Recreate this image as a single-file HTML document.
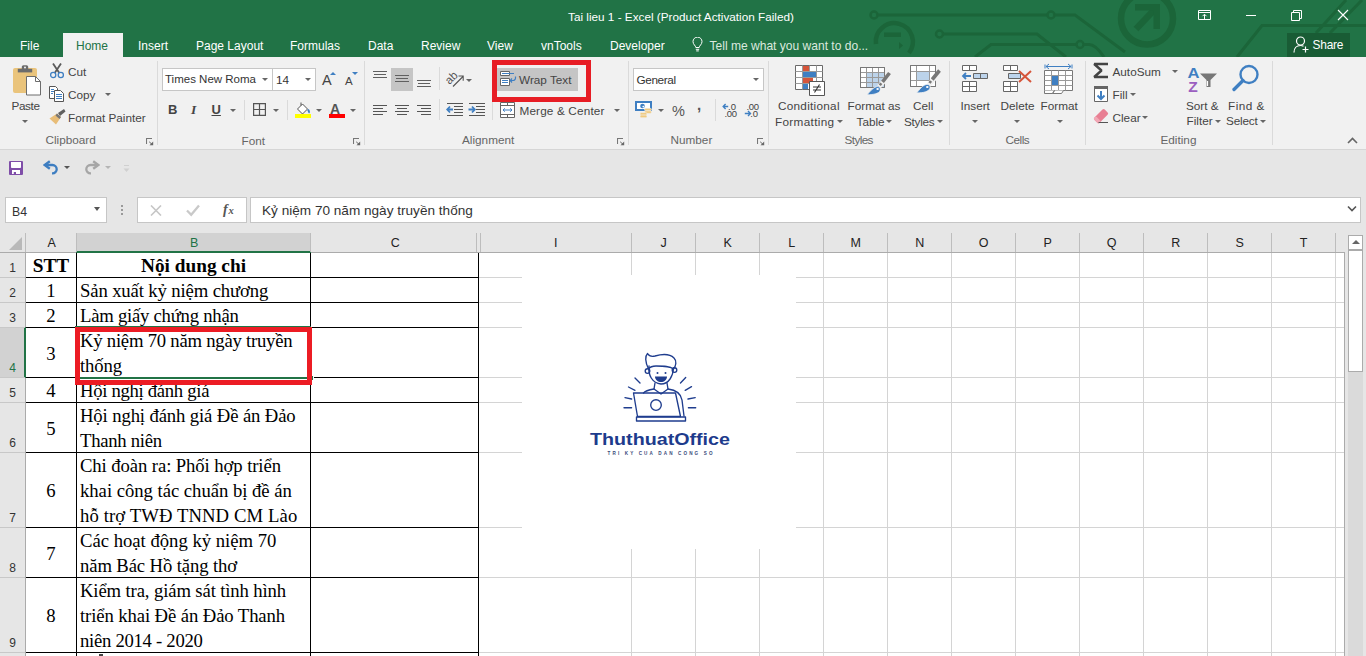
<!DOCTYPE html>
<html><head><meta charset="utf-8">
<style>
*{margin:0;padding:0;box-sizing:border-box}
html,body{width:1366px;height:656px;overflow:hidden;background:#e6e6e6;font-family:"Liberation Sans",sans-serif;position:relative}
.a{position:absolute}
.t{position:absolute;white-space:nowrap;line-height:1}
#title{left:0;top:0;width:1366px;height:57px;background:#217346}
.tab{color:#fff;font-size:12px}
#ribbon{left:0;top:57px;width:1366px;height:93px;background:#f1f1f1;border-bottom:1px solid #d6d6d6}
.rl{color:#444;font-size:11.75px}
.gl{color:#666;font-size:11.75px}
.sep{position:absolute;width:1px;background:#dadada}
.arr{position:absolute;width:0;height:0;border-left:3px solid transparent;border-right:3px solid transparent;border-top:3px solid #666}
.box{position:absolute;background:#fff;border:1px solid #c6c6c6}
.hl{position:absolute;height:1px;background:#000}
.vl{position:absolute;width:1px;background:#000}
.gh{position:absolute;height:1px;background:#d4d4d4}
.gv{position:absolute;width:1px;background:#d4d4d4}
.ch{position:absolute;top:237px;color:#222;font-size:12.5px;text-align:center;line-height:1}
.rh{position:absolute;left:0;width:25px;color:#333;font-size:12px;text-align:center;line-height:1}
.c{position:absolute;font-family:"Liberation Serif",serif;font-size:18.7px;color:#000;white-space:nowrap;line-height:25px}
</style></head><body>
<!-- TITLE BAR -->
<div id="title" class="a"></div>
<!--TITLESTART-->
<svg class="a" style="left:840px;top:0" width="526" height="57" viewBox="840 0 526 57">
 <g fill="none" stroke="#1b6539" stroke-width="3">
  <circle cx="874" cy="15" r="3.5" stroke-width="2.5"/>
  <path d="M877.5 15H1047.5"/>
  <circle cx="1051" cy="15" r="3.5" stroke-width="2.5"/>
  <path d="M1054.5 15H1075L1125 52"/>
  <circle cx="939.5" cy="34" r="3.5" stroke-width="2.5"/>
  <path d="M943 34H1037L1066 57"/>
  <path d="M975 57L991 44.5H1076.5"/>
  <circle cx="1080" cy="44.5" r="3.5" stroke-width="2.5"/>
  <path d="M1083.5 44.5H1089C1094 44.5 1098 48 1104 57"/>
  <path d="M876 44A18.5 18.5 0 1 1 909 53" stroke-width="4.5"/>
  <path d="M1237 57L1262 25.5H1366M1316 33L1346 0M1330 33L1362 0" stroke-width="3"/>
  <circle cx="1147" cy="18.5" r="26" stroke-width="6.5"/>
  <path d="M1136 29L1156 8" stroke-width="6.5"/>
 </g>
 <path d="M884 32.5h17v4.5h-17z" fill="#1b6539"/>
 <path d="M899 42l4 3.5-4 3.5z" fill="#1b6539"/>
 <path d="M1135 4h25v25h-6.5v-18.5h-18.5z" fill="#1b6539"/>
</svg>
<!-- window controls -->
<svg class="a" style="left:1197px;top:9px" width="15" height="12" viewBox="0 0 15 12"><path d="M1.5 1.5h12v9h-12zM1.5 3.5h12" fill="none" stroke="#fff"/><path d="M7.5 10V5.5M5.5 7.2L7.5 5.2 9.5 7.2" fill="none" stroke="#fff"/></svg>
<div class="a" style="left:1246px;top:15px;width:10px;height:1px;background:#fff"></div>
<svg class="a" style="left:1291px;top:10px" width="12" height="11" viewBox="0 0 12 11"><path d="M0.5 2.5h8v8h-8zM2.5 2.5V0.5h8v8h-2" fill="none" stroke="#fff"/></svg>
<svg class="a" style="left:1337px;top:9px" width="12" height="12" viewBox="0 0 12 12"><path d="M1 1l10 10M11 1L1 11" stroke="#fff" stroke-width="1.1"/></svg>
<!-- share -->
<div class="a" style="left:1287px;top:33px;width:63px;height:24px;background:#195c35"></div>
<svg class="a" style="left:1293px;top:36px" width="17" height="17" viewBox="0 0 17 17">
 <circle cx="7.5" cy="5" r="4" fill="none" stroke="#fff" stroke-width="1.2"/>
 <path d="M1 16.5c0-4 2.5-7 6.5-7 1.2 0 2.2 0.3 3 0.8" fill="none" stroke="#fff" stroke-width="1.2"/>
 <path d="M12.5 10.5v6M9.5 13.5h6" stroke="#fff" stroke-width="1.2"/>
</svg>
<div class="t" style="left:1312.5px;top:39.5px;font-size:11.9px;color:#fff;letter-spacing:-0.2px">Share</div>
<!-- lightbulb -->
<svg class="a" style="left:692px;top:37px" width="11" height="15" viewBox="0 0 11 15">
 <path d="M3.8 10.5C3.8 8.7 1 7.5 1 4.6a4.5 4.5 0 0 1 9 0c0 2.9-2.8 4.1-2.8 5.9z" fill="none" stroke="#fff" stroke-width="1"/>
 <path d="M3.8 12.3h3.4M4.2 13.9h2.6" stroke="#fff" stroke-width="1"/>
</svg>
<!--TITLEEND-->

<div class="t tab" style="left:568px;top:11px;font-size:11.75px">Tai lieu 1 - Excel (Product Activation Failed)</div>

<!-- TABS -->
<div class="a" style="left:63px;top:33px;width:60px;height:24px;background:#f1f1f1"></div>
<div class="t tab" style="left:20px;top:40px">File</div>
<div class="t tab" style="left:76px;top:40px;color:#217346">Home</div>
<div class="t tab" style="left:138px;top:40px">Insert</div>
<div class="t tab" style="left:196px;top:40px">Page Layout</div>
<div class="t tab" style="left:290px;top:40px">Formulas</div>
<div class="t tab" style="left:368px;top:40px">Data</div>
<div class="t tab" style="left:421px;top:40px">Review</div>
<div class="t tab" style="left:487px;top:40px">View</div>
<div class="t tab" style="left:541px;top:40px">vnTools</div>
<div class="t tab" style="left:610px;top:40px">Developer</div>
<div class="t tab" style="left:709.5px;top:40px;color:#dbe9df;font-size:12.05px">Tell me what you want to do...</div>

<!-- RIBBON -->
<div id="ribbon" class="a"></div>
<!--RIBBON1START-->
<!-- separators -->
<div class="sep" style="left:157px;top:61px;height:84px"></div>
<div class="sep" style="left:364px;top:61px;height:84px"></div>
<div class="sep" style="left:628px;top:61px;height:84px"></div>
<div class="sep" style="left:768px;top:61px;height:84px"></div>
<div class="sep" style="left:949px;top:61px;height:84px"></div>
<div class="sep" style="left:1085px;top:61px;height:84px"></div>
<div class="sep" style="left:1272px;top:61px;height:84px"></div>
<!-- group labels -->
<div class="t gl" style="left:45.5px;top:134px">Clipboard</div>
<div class="t gl" style="left:241.5px;top:134.5px">Font</div>
<div class="t gl" style="left:462px;top:134px">Alignment</div>
<div class="t gl" style="left:670.5px;top:134px">Number</div>
<div class="t gl" style="left:844.5px;top:134px;letter-spacing:-0.6px">Styles</div>
<div class="t gl" style="left:1005.5px;top:134px;letter-spacing:-0.5px">Cells</div>
<div class="t gl" style="left:1160.5px;top:134px">Editing</div>
<!-- launchers -->
<svg class="a" style="left:146px;top:138px" width="8" height="8" viewBox="0 0 8 8"><path d="M0.5 6V0.5H6" fill="none" stroke="#777" stroke-width="1.1"/><path d="M3.2 3.8L6 6.3" stroke="#666" stroke-width="1"/><path d="M7.2 3.5V7.3H3.5z" fill="#666"/></svg>
<svg class="a" style="left:353px;top:138px" width="8" height="8" viewBox="0 0 8 8"><path d="M0.5 6V0.5H6" fill="none" stroke="#777" stroke-width="1.1"/><path d="M3.2 3.8L6 6.3" stroke="#666" stroke-width="1"/><path d="M7.2 3.5V7.3H3.5z" fill="#666"/></svg>
<svg class="a" style="left:617px;top:138px" width="8" height="8" viewBox="0 0 8 8"><path d="M0.5 6V0.5H6" fill="none" stroke="#777" stroke-width="1.1"/><path d="M3.2 3.8L6 6.3" stroke="#666" stroke-width="1"/><path d="M7.2 3.5V7.3H3.5z" fill="#666"/></svg>
<svg class="a" style="left:757px;top:138px" width="8" height="8" viewBox="0 0 8 8"><path d="M0.5 6V0.5H6" fill="none" stroke="#777" stroke-width="1.1"/><path d="M3.2 3.8L6 6.3" stroke="#666" stroke-width="1"/><path d="M7.2 3.5V7.3H3.5z" fill="#666"/></svg>
<!-- collapse ribbon -->
<svg class="a" style="left:1347px;top:137px" width="11" height="7" viewBox="0 0 11 7"><path d="M1 6L5.5 1.5L10 6" fill="none" stroke="#666" stroke-width="1.6"/></svg>

<!-- CLIPBOARD -->
<svg class="a" style="left:12px;top:64px" width="30" height="32" viewBox="0 0 30 32">
 <rect x="1" y="4" width="24" height="25" rx="2" fill="#eac47c"/>
 <path d="M5.8 4.8h14.4v3.6H5.8z" fill="#6c6c6c"/><path d="M9.8 5V2.8a1.6 1.6 0 0 1 1.6-1.6h3.2a1.6 1.6 0 0 1 1.6 1.6V5z" fill="#6c6c6c"/><circle cx="13" cy="3.6" r="1" fill="#f1f1f1"/>
 <path d="M14.5 12.5h9l5 5v13.5h-14z" fill="#fff" stroke="#6c6c6c"/><path d="M23.5 12.5v5h5" fill="none" stroke="#6c6c6c"/>
</svg>
<div class="t rl" style="left:11.5px;top:100px;letter-spacing:-0.4px">Paste</div>
<div class="arr" style="left:21.5px;top:120px"></div>
<svg class="a" style="left:49px;top:62px" width="16" height="17" viewBox="0 0 16 17">
 <path d="M4 1.5L10.3 11M12 1.5L5.7 11" fill="none" stroke="#5a5a5a" stroke-width="1.8"/>
 <circle cx="4.2" cy="13" r="2.6" fill="#f1f1f1" stroke="#3f7fc2" stroke-width="1.3"/><circle cx="11.8" cy="13" r="2.6" fill="#f1f1f1" stroke="#3f7fc2" stroke-width="1.3"/>
</svg>
<div class="t rl" style="left:68px;top:66px">Cut</div>
<svg class="a" style="left:49px;top:86px" width="16" height="16" viewBox="0 0 16 16">
 <path d="M0.5 0.5h6l2 2v10h-8z" fill="#fff" stroke="#555"/>
 <path d="M5.5 4.5h6l3 3v8h-9z" fill="#fff" stroke="#555"/>
 <path d="M2 3.5h3M2 5.5h3M2 7.5h2" stroke="#3f7fc2"/>
 <path d="M7 8.5h6M7 10.5h6M7 12.5h6" stroke="#3f7fc2"/>
</svg>
<div class="t rl" style="left:68px;top:88.5px">Copy</div>
<div class="arr" style="left:105px;top:93px"></div>
<svg class="a" style="left:49px;top:109px" width="17" height="16" viewBox="0 0 17 16">
 <path d="M9 4l6-4 1.5 2.5-5.5 4.5z" fill="#5f5f5f"/>
 <path d="M8 4.5l4 3.5-5 7.5L0.5 9.5z" fill="#e8bd78"/>
 <path d="M8 4.5l4 3.5-1.5 2-4-3.5z" fill="#777"/>
</svg>
<div class="t rl" style="left:68px;top:111.5px">Format Painter</div>

<!-- FONT -->
<div class="box" style="left:162px;top:68px;width:111px;height:23px"></div>
<div class="box" style="left:272px;top:68px;width:44px;height:23px"></div>
<div class="t" style="left:165px;top:74px;font-size:11.5px;color:#333">Times New Roma</div>
<div class="arr" style="left:262px;top:78px"></div>
<div class="t" style="left:276px;top:74px;font-size:11.75px;color:#333">14</div>
<div class="arr" style="left:305px;top:78px"></div>
<div class="t" style="left:322px;top:72.5px;font-size:14.5px;color:#444">A</div>
<div class="a" style="left:329.5px;top:72px;width:0;height:0;border-left:3px solid transparent;border-right:3px solid transparent;border-bottom:3px solid #3f7fc2"></div>
<div class="t" style="left:345px;top:76px;font-size:11.5px;color:#444">A</div>
<div class="a" style="left:351.5px;top:72px;width:0;height:0;border-left:3px solid transparent;border-right:3px solid transparent;border-top:3px solid #3f7fc2"></div>
<div class="t" style="left:168px;top:103px;font-size:13px;font-weight:bold;color:#444">B</div>
<div class="t" style="left:191px;top:103px;font-size:13.5px;font-style:italic;font-family:'Liberation Serif',serif;color:#444;font-weight:bold">I</div>
<div class="t" style="left:211.5px;top:103px;font-size:13px;font-weight:bold;color:#444;text-decoration:underline">U</div>
<div class="arr" style="left:230px;top:109px"></div>
<div class="sep" style="left:244px;top:100px;height:20px"></div>
<svg class="a" style="left:253px;top:103px" width="13" height="13" viewBox="0 0 13 13"><path d="M0.6 0.6h11.8v11.8H0.6zM6.5 0.6v11.8M0.6 6.5h11.8" fill="none" stroke="#555" stroke-width="1.2"/></svg>
<div class="arr" style="left:273px;top:109px"></div>
<div class="sep" style="left:287px;top:100px;height:20px"></div>
<svg class="a" style="left:295px;top:101px" width="17" height="18" viewBox="0 0 17 18">
 <path d="M6 1.5v3M2.5 8L7.5 3l5 5-5 5z" fill="#fff" stroke="#555"/>
 <path d="M13 8.5c1 1.5 1.5 2.5 0.5 3.2" fill="none" stroke="#3f7fc2" stroke-width="2"/>
 <rect x="0" y="13" width="16" height="4" fill="#ffff00"/>
</svg>
<div class="arr" style="left:316px;top:109px"></div>
<div class="t" style="left:330px;top:102px;font-size:14px;color:#555;font-weight:bold">A</div>
<div class="a" style="left:329px;top:114px;width:16px;height:4px;background:#ff0000"></div>
<div class="arr" style="left:350px;top:109px"></div>
<!--RIBBON1END-->
<!--RIBBON2START-->
<!-- ALIGNMENT -->
<svg class="a" style="left:372px;top:70px" width="16" height="9" viewBox="0 0 16 9"><path d="M1 1.5h14M2 4.5h12M1 7.5h14" stroke="#606060"/></svg>
<div class="a" style="left:391px;top:68px;width:22px;height:23px;background:#c5c5c5"></div>
<svg class="a" style="left:394px;top:74px" width="16" height="9" viewBox="0 0 16 9"><path d="M1 1.5h14M2 4.5h12M1 7.5h14" stroke="#606060"/></svg>
<svg class="a" style="left:416px;top:79px" width="16" height="9" viewBox="0 0 16 9"><path d="M1 1.5h14M2 4.5h12M1 7.5h14" stroke="#606060"/></svg>
<div class="sep" style="left:439px;top:67px;height:23px"></div>
<svg class="a" style="left:446px;top:69px" width="19" height="19" viewBox="0 0 19 19">
 <text x="0" y="0" font-family="Liberation Sans" font-size="11.5" fill="#555" transform="translate(3.5,16) rotate(-45)">ab</text>
 <path d="M7 17.5L17 7.5M12.5 7H17.2V11.7" fill="none" stroke="#555" stroke-width="1.1"/>
</svg>
<div class="arr" style="left:466px;top:79px"></div>
<svg class="a" style="left:372px;top:104px" width="16" height="12" viewBox="0 0 16 12"><path d="M1 1.5h14M1 4.5h10M1 7.5h14M1 10.5h10" stroke="#555"/></svg>
<svg class="a" style="left:394px;top:104px" width="16" height="12" viewBox="0 0 16 12"><path d="M1 1.5h14M3 4.5h10M1 7.5h14M3 10.5h10" stroke="#555"/></svg>
<svg class="a" style="left:416px;top:104px" width="16" height="12" viewBox="0 0 16 12"><path d="M1 1.5h14M5 4.5h10M1 7.5h14M5 10.5h10" stroke="#555"/></svg>
<div class="sep" style="left:439px;top:99px;height:21px"></div>
<svg class="a" style="left:446px;top:102px" width="18" height="14" viewBox="0 0 18 14">
 <path d="M1 1.5h16M8 4.5h9M8 7.5h9M8 10.5h9M1 13.5h16" stroke="#555"/>
 <path d="M1.5 7.5H7M4 4.5L1.2 7.5L4 10.5" fill="none" stroke="#3f7fc2" stroke-width="1.8"/>
</svg>
<svg class="a" style="left:468px;top:102px" width="18" height="14" viewBox="0 0 18 14">
 <path d="M1 1.5h16M8 4.5h9M8 7.5h9M8 10.5h9M1 13.5h16" stroke="#555"/>
 <path d="M0.5 7.5H6.5M4 4.5L6.8 7.5L4 10.5" fill="none" stroke="#3f7fc2" stroke-width="1.8"/>
</svg>
<div class="sep" style="left:492px;top:99px;height:21px"></div>
<div class="a" style="left:497px;top:68px;width:81px;height:23px;background:#c5c5c5"></div>
<svg class="a" style="left:499px;top:70px" width="18" height="17" viewBox="0 0 18 17">
 <path d="M1.5 1.5h9v4h-9zM1.5 8.5h9v7h-9z" fill="#fff" stroke="#666"/>
 <path d="M3 3.5h12M3 10.5h6M3 12.5h6" stroke="#3f7fc2"/>
 <path d="M16.5 6.5v1.5a2.5 2.5 0 0 1-2.5 2.5H11.5M13 8.5L11.2 10.5 13 12.5" fill="none" stroke="#3f7fc2" stroke-width="1.2"/>
</svg>
<div class="t rl" style="left:519px;top:74px">Wrap Text</div>
<svg class="a" style="left:499px;top:102px" width="17" height="16" viewBox="0 0 17 16">
 <path d="M1.5 0.5h14v15h-14z" fill="#fff" stroke="#666"/>
 <path d="M1.5 3.5h14M1.5 12.5h14M8.5 0.5v3M8.5 12.5v3" stroke="#666"/>
 <path d="M4 8h9M5.8 6.3L4 8 5.8 9.7M11.2 6.3L13 8 11.2 9.7" fill="none" stroke="#3f7fc2"/>
</svg>
<div class="t rl" style="left:519.5px;top:105px;letter-spacing:0.15px">Merge &amp; Center</div>
<div class="arr" style="left:613.5px;top:109px"></div>
<!-- red box -->
<div class="a" style="left:492px;top:60px;width:99px;height:42px;border:5px solid #e71d25"></div>

<!-- NUMBER -->
<div class="box" style="left:633px;top:68px;width:131px;height:23px"></div>
<div class="t" style="left:636.5px;top:74px;font-size:11.75px;color:#333;letter-spacing:-0.37px">General</div>
<div class="arr" style="left:753px;top:78px"></div>
<svg class="a" style="left:635px;top:101px" width="18" height="18" viewBox="0 0 18 18">
 <rect x="1" y="1" width="15" height="8" fill="#fff" stroke="#3f7fc2" stroke-width="2"/>
 <circle cx="7.5" cy="5" r="2.3" fill="#3f7fc2"/><circle cx="8.3" cy="5.6" r="0.9" fill="#fff"/>
 <g fill="#f0c97e" stroke="#f1f1f1" stroke-width="0.6"><rect x="9.5" y="7.3" width="7" height="2.6" rx="1.3"/><rect x="9.5" y="9.8" width="7" height="2.6" rx="1.3"/><rect x="5" y="11.6" width="7" height="2.6" rx="1.3"/><rect x="5" y="14.1" width="7" height="2.6" rx="1.3"/></g>
</svg>
<div class="arr" style="left:657.5px;top:109px"></div>
<div class="t" style="left:672px;top:104px;font-size:14.5px;color:#555">%</div>
<div class="t" style="left:697px;top:97px;font-size:15px;font-weight:bold;color:#555">,</div>
<div class="sep" style="left:715px;top:99px;height:22px"></div>
<svg class="a" style="left:722px;top:102px" width="16" height="16" viewBox="0 0 16 16">
 <path d="M1.2 4.5h5M3.6 2L1.2 4.5 3.6 7" fill="none" stroke="#3f7fc2" stroke-width="1.4"/>
 <text x="6" y="8.2" font-family="Liberation Sans" font-size="9.5" fill="#444">.0</text>
 <text x="2.5" y="15" font-family="Liberation Sans" font-size="9.5" fill="#444" letter-spacing="-0.3">.00</text>
</svg>
<svg class="a" style="left:744px;top:102px" width="16" height="16" viewBox="0 0 16 16">
 <text x="2.5" y="8.2" font-family="Liberation Sans" font-size="9.5" fill="#444" letter-spacing="-0.3">.00</text>
 <path d="M0.8 11.5h5.5M4 9L6.5 11.5 4 14" fill="none" stroke="#3f7fc2" stroke-width="1.4"/>
 <text x="6.2" y="15" font-family="Liberation Sans" font-size="9.5" fill="#444">.0</text>
</svg>
<!--RIBBON2END-->
<!--RIBBON3START-->
<!-- STYLES -->
<svg class="a" style="left:795px;top:65px" width="32" height="32" viewBox="0 0 32 32">
 <path d="M0.5 0.5h27v24h-27z" fill="#fff" stroke="#6a6a6a"/>
 <path d="M0.5 6.5h27M0.5 12.5h27M0.5 18.5h27M7.5 0.5v24M14.5 0.5v24M21.5 0.5v24" stroke="#9a9a9a"/>
 <rect x="8" y="1" width="6" height="5" fill="#d6553a"/>
 <rect x="8" y="7" width="13" height="5" fill="#3f7fc2"/>
 <rect x="8" y="13" width="10" height="5" fill="#d6553a"/>
 <rect x="8" y="19" width="5" height="5" fill="#3f7fc2"/>
 <path d="M14.5 16.5h15v14h-15z" fill="#fff" stroke="#555"/>
 <path d="M18 22h8M18 25h8M24.5 19.5l-5 8" stroke="#333" stroke-width="1.1"/>
</svg>
<div class="t rl" style="left:778px;top:100px;letter-spacing:0.27px">Conditional</div>
<div class="t rl" style="left:775px;top:115.5px;letter-spacing:0.33px">Formatting</div>
<div class="arr" style="left:836.5px;top:120px"></div>
<svg class="a" style="left:859px;top:67px" width="32" height="30" viewBox="0 0 32 30">
 <path d="M1.5 0.5h24v20h-24z" fill="#fff" stroke="#777"/>
 <rect x="7.5" y="5.5" width="18" height="15" fill="#bcd3ea"/>
 <path d="M1.5 5.5h24M1.5 10.5h24M1.5 15.5h24M7.5 0.5v20M13.5 0.5v20M19.5 0.5v20" stroke="#999"/>
 <path d="M1.5 0.5h24v20h-24z" fill="none" stroke="#777"/>
 <path d="M20 19.8L31 7" stroke="#f1f1f1" stroke-width="4.8"/>
 <path d="M30.5 6L23.5 14.8" stroke="#777" stroke-width="3.6"/>
 <path d="M22.3 16.3L20.8 18.2" stroke="#777" stroke-width="2.6"/>
 <path d="M8 27.8C11 24.5 14 20.5 17.5 19.7C20.3 19.2 22 21 21 23.8C20 26.3 15 27.8 8 27.8Z" fill="#3f7fc2" stroke="#f1f1f1" stroke-width="0.8"/>
 <ellipse cx="18.6" cy="22" rx="1.3" ry="1" fill="#fff"/>
</svg>
<div class="t rl" style="left:847.5px;top:100px">Format as</div>
<div class="t rl" style="left:856.5px;top:115.5px">Table</div>
<div class="arr" style="left:885.5px;top:120px"></div>
<svg class="a" style="left:909px;top:65px" width="32" height="30" viewBox="0 0 32 30">
 <path d="M1.5 0.5h25v21h-25z" fill="#fff" stroke="#777"/>
 <rect x="7.5" y="6.5" width="13" height="9" fill="#bcd3ea"/>
 <path d="M1.5 6.5h25M1.5 15.5h25M7.5 0.5v21M20.5 0.5v21" stroke="#999"/>
 <path d="M1.5 0.5h25v21h-25z" fill="none" stroke="#777"/>
 <path d="M19.8 19.8L31.5 6.5" stroke="#f1f1f1" stroke-width="4.8"/>
 <path d="M30.5 5.5L23.2 14.5" stroke="#777" stroke-width="3.6"/>
 <path d="M22 16L20.5 18" stroke="#777" stroke-width="2.6"/>
 <path d="M7.6 28C10.5 24.6 13.5 20.3 17.2 19.5C20 19 21.8 20.8 20.8 23.6C19.8 26.3 14.8 28 7.6 28Z" fill="#3f7fc2" stroke="#f1f1f1" stroke-width="0.8"/>
 <ellipse cx="18.3" cy="21.9" rx="1.3" ry="1" fill="#fff"/>
</svg>
<div class="t rl" style="left:913px;top:100px">Cell</div>
<div class="t rl" style="left:904px;top:115.5px;letter-spacing:-0.26px">Styles</div>
<div class="arr" style="left:937px;top:120px"></div>

<!-- CELLS -->
<svg class="a" style="left:961px;top:64px" width="28" height="29" viewBox="0 0 28 29">
 <path d="M1.5 1.5h14v5h-14zM1.5 17.5h14v10h-14z" fill="#fff" stroke="#666"/>
 <path d="M8.5 1.5v5M1.5 22.5h14M8.5 17.5v10" stroke="#666"/>
 <path d="M12.5 9.5h14v5h-14z" fill="#bdd4ec" stroke="#666"/><path d="M19.5 9.5v5" stroke="#666"/>
 <path d="M2 12h8M5 9L2 12 5 15" fill="none" stroke="#3f7fc2" stroke-width="1.8"/>
</svg>
<div class="t rl" style="left:960.5px;top:100px">Insert</div>
<div class="arr" style="left:971.5px;top:120px"></div>
<svg class="a" style="left:1002px;top:64px" width="32" height="30" viewBox="0 0 32 30">
 <path d="M1.5 1.5h14v5h-14zM1.5 17.5h14v10h-14z" fill="#fff" stroke="#666"/>
 <path d="M8.5 1.5v5M1.5 22.5h14M8.5 17.5v10" stroke="#666"/>
 <path d="M6.5 9.5h12v5h-12z" fill="#bdd4ec" stroke="#666"/>
 <path d="M17 7l12 11M29 7L17 18" stroke="#d6553a" stroke-width="2"/>
</svg>
<div class="t rl" style="left:1000.5px;top:100px">Delete</div>
<div class="arr" style="left:1013.5px;top:120px"></div>
<svg class="a" style="left:1044px;top:63px" width="30" height="32" viewBox="0 0 30 32">
 <path d="M1 1.5v4M28 1.5v4M2 3.5h25M5 1L2 3.5 5 6M24 1l3 2.5L24 6" fill="none" stroke="#3f7fc2"/>
 <path d="M0.5 7.5h28v20h-28z" fill="#fff" stroke="#777"/>
 <path d="M0.5 12.5h28M0.5 17.5h28M0.5 22.5h28M7.5 7.5v20M14.5 7.5v20M21.5 7.5v20" stroke="#9a9a9a"/>
 <rect x="8" y="13" width="6" height="9" fill="#3f7fc2"/>
 <path d="M0.5 27.5v3h8l2-3M10.5 27.5l-2 3h9l2-3" fill="#fff" stroke="#777"/>
</svg>
<div class="t rl" style="left:1040.5px;top:100px">Format</div>
<div class="arr" style="left:1056.5px;top:120px"></div>

<!-- EDITING -->
<svg class="a" style="left:1092px;top:62px" width="17" height="18" viewBox="0 0 17 18"><path d="M16 2H2.2L9.5 8.5L2.2 15H16" fill="none" stroke="#444" stroke-width="2.4" stroke-linejoin="bevel"/></svg>
<div class="t rl" style="left:1112.5px;top:66px">AutoSum</div>
<div class="arr" style="left:1171.5px;top:70px"></div>
<svg class="a" style="left:1093px;top:85px" width="16" height="18" viewBox="0 0 16 18">
 <path d="M1.5 1.5h13v15h-13z" fill="#fff" stroke="#666"/><rect x="1" y="1" width="14" height="3" fill="#666"/>
 <path d="M8 6v8M4.5 10.5L8 14l3.5-3.5" fill="none" stroke="#3f7fc2" stroke-width="2"/>
</svg>
<div class="t rl" style="left:1112.5px;top:88.5px">Fill</div>
<div class="arr" style="left:1129.5px;top:93px"></div>
<svg class="a" style="left:1093px;top:109px" width="16" height="15" viewBox="0 0 16 15">
 <g transform="rotate(-45 8 7.2)"><rect x="0.8" y="3.6" width="14.5" height="7.2" rx="1.6" fill="#e87f93"/><rect x="0.8" y="3.6" width="3.6" height="7.2" rx="1.2" fill="#f2a7b5"/></g>
 <path d="M5.5 13.5h9.5" stroke="#555" stroke-width="1"/>
</svg>
<div class="t rl" style="left:1112.5px;top:111.5px">Clear</div>
<div class="arr" style="left:1141.5px;top:116px"></div>
<svg class="a" style="left:1187px;top:64px" width="32" height="30" viewBox="0 0 32 30">
 <text x="0.5" y="13.8" font-family="Liberation Sans" font-weight="bold" font-size="15.5" fill="#3f7fc2" textLength="12" lengthAdjust="spacingAndGlyphs">A</text>
 <text x="1.2" y="27.6" font-family="Liberation Sans" font-weight="bold" font-size="15" fill="#9b5fc0" textLength="9.5" lengthAdjust="spacingAndGlyphs">Z</text>
 <path d="M13 9.5h17l-6.5 6.5v7h-4v-7z" fill="#777"/><path d="M20.5 17v5" stroke="#fff" stroke-width="1.2"/>
</svg>
<div class="t rl" style="left:1186px;top:100px">Sort &amp;</div>
<div class="t rl" style="left:1186.5px;top:115px">Filter</div>
<div class="arr" style="left:1215px;top:120px"></div>
<svg class="a" style="left:1231px;top:64px" width="29" height="29" viewBox="0 0 29 29">
 <circle cx="18" cy="10.5" r="8.5" fill="none" stroke="#3f7fc2" stroke-width="2.4"/>
 <path d="M12 16.5L3 25.5" stroke="#3f7fc2" stroke-width="3.4" stroke-linecap="round"/>
</svg>
<div class="t rl" style="left:1228px;top:100px;letter-spacing:0.5px">Find &amp;</div>
<div class="t rl" style="left:1226px;top:115px;letter-spacing:-0.2px">Select</div>
<div class="arr" style="left:1259.5px;top:120px"></div>
<!--RIBBON3END-->




<!-- QAT area is body bg -->

<!-- FORMULA BAR -->


<div class="box" style="left:5px;top:197px;width:102px;height:26px"></div>
<div class="t" style="left:12px;top:205.5px;font-size:12.3px;color:#333">B4</div>
<div class="box" style="left:137px;top:197px;width:110px;height:26px"></div>
<div class="box" style="left:250px;top:197px;width:1111px;height:26px"></div>
<div class="t" style="left:262px;top:204px;font-size:13.6px;color:#333">Kỷ niệm 70 năm ngày truyền thống</div>

<!-- GRID -->
<div class="a" style="left:26px;top:253px;width:1318px;height:403px;background:#fff"></div>
<!--GRIDSTART-->
<div class="a" style="left:0;top:233px;width:1344px;height:19px;background:#e6e6e6"></div>
<div class="a" style="left:77px;top:233px;width:233px;height:19px;background:#d2d2d2"></div>
<div class="a" style="left:0;top:252px;width:1344px;height:1px;background:#ababab"></div>
<div class="a" style="left:76px;top:251px;width:235px;height:2px;background:#217346"></div>
<div class="a" style="left:25px;top:233px;width:1px;height:19px;background:#bdbdbd"></div>
<div class="a" style="left:76px;top:233px;width:1px;height:19px;background:#bdbdbd"></div>
<div class="a" style="left:310px;top:233px;width:1px;height:19px;background:#bdbdbd"></div>
<div class="a" style="left:476px;top:233px;width:1px;height:19px;background:#bdbdbd"></div>
<div class="a" style="left:480px;top:233px;width:1px;height:19px;background:#bdbdbd"></div>
<div class="a" style="left:631px;top:233px;width:1px;height:19px;background:#bdbdbd"></div>
<div class="a" style="left:695px;top:233px;width:1px;height:19px;background:#bdbdbd"></div>
<div class="a" style="left:759px;top:233px;width:1px;height:19px;background:#bdbdbd"></div>
<div class="a" style="left:823px;top:233px;width:1px;height:19px;background:#bdbdbd"></div>
<div class="a" style="left:887px;top:233px;width:1px;height:19px;background:#bdbdbd"></div>
<div class="a" style="left:951px;top:233px;width:1px;height:19px;background:#bdbdbd"></div>
<div class="a" style="left:1015px;top:233px;width:1px;height:19px;background:#bdbdbd"></div>
<div class="a" style="left:1079px;top:233px;width:1px;height:19px;background:#bdbdbd"></div>
<div class="a" style="left:1143px;top:233px;width:1px;height:19px;background:#bdbdbd"></div>
<div class="a" style="left:1207px;top:233px;width:1px;height:19px;background:#bdbdbd"></div>
<div class="a" style="left:1271px;top:233px;width:1px;height:19px;background:#bdbdbd"></div>
<div class="a" style="left:1335px;top:233px;width:1px;height:19px;background:#bdbdbd"></div>
<div class="a" style="left:9px;top:237px;width:0;height:0;border-left:13px solid transparent;border-bottom:13px solid #b9b9b9"></div>
<div class="ch" style="left:26.7px;width:50px;color:#222">A</div>
<div class="ch" style="left:77.7px;width:233px;color:#217346">B</div>
<div class="ch" style="left:311.7px;width:167px;color:#222">C</div>
<div class="ch" style="left:479.7px;width:152px;color:#222">I</div>
<div class="ch" style="left:631.7px;width:64px;color:#222">J</div>
<div class="ch" style="left:695.7px;width:64px;color:#222">K</div>
<div class="ch" style="left:759.7px;width:64px;color:#222">L</div>
<div class="ch" style="left:823.7px;width:64px;color:#222">M</div>
<div class="ch" style="left:887.7px;width:64px;color:#222">N</div>
<div class="ch" style="left:951.7px;width:64px;color:#222">O</div>
<div class="ch" style="left:1015.7px;width:64px;color:#222">P</div>
<div class="ch" style="left:1079.7px;width:64px;color:#222">Q</div>
<div class="ch" style="left:1143.7px;width:64px;color:#222">R</div>
<div class="ch" style="left:1207.7px;width:64px;color:#222">S</div>
<div class="ch" style="left:1271.7px;width:64px;color:#222">T</div>
<div class="a" style="left:0;top:253px;width:25px;height:403px;background:#e6e6e6"></div>
<div class="a" style="left:0;top:328px;width:25px;height:49px;background:#d2d2d2"></div>
<div class="a" style="left:25px;top:253px;width:1px;height:403px;background:#ababab"></div>
<div class="a" style="left:24px;top:327px;width:2px;height:51px;background:#217346"></div>
<div class="a" style="left:0;top:277px;width:25px;height:1px;background:#c8c8c8"></div>
<div class="a" style="left:0;top:302px;width:25px;height:1px;background:#c8c8c8"></div>
<div class="a" style="left:0;top:327px;width:25px;height:1px;background:#c8c8c8"></div>
<div class="a" style="left:0;top:377px;width:25px;height:1px;background:#c8c8c8"></div>
<div class="a" style="left:0;top:402px;width:25px;height:1px;background:#c8c8c8"></div>
<div class="a" style="left:0;top:452px;width:25px;height:1px;background:#c8c8c8"></div>
<div class="a" style="left:0;top:527px;width:25px;height:1px;background:#c8c8c8"></div>
<div class="a" style="left:0;top:577px;width:25px;height:1px;background:#c8c8c8"></div>
<div class="a" style="left:0;top:652px;width:25px;height:1px;background:#c8c8c8"></div>
<div class="rh" style="top:262px;color:#333">1</div>
<div class="rh" style="top:287px;color:#333">2</div>
<div class="rh" style="top:312px;color:#333">3</div>
<div class="rh" style="top:362px;color:#217346">4</div>
<div class="rh" style="top:387px;color:#333">5</div>
<div class="rh" style="top:437px;color:#333">6</div>
<div class="rh" style="top:512px;color:#333">7</div>
<div class="rh" style="top:562px;color:#333">8</div>
<div class="rh" style="top:637px;color:#333">9</div>
<div class="rh" style="top:664px">10</div>
<div class="gh" style="left:479px;top:277px;width:865px"></div>
<div class="gh" style="left:479px;top:302px;width:865px"></div>
<div class="gh" style="left:479px;top:327px;width:865px"></div>
<div class="gh" style="left:479px;top:377px;width:865px"></div>
<div class="gh" style="left:479px;top:402px;width:865px"></div>
<div class="gh" style="left:479px;top:452px;width:865px"></div>
<div class="gh" style="left:479px;top:527px;width:865px"></div>
<div class="gh" style="left:479px;top:577px;width:865px"></div>
<div class="gh" style="left:479px;top:652px;width:865px"></div>
<div class="gv" style="left:631px;top:253px;height:403px"></div>
<div class="gv" style="left:695px;top:253px;height:403px"></div>
<div class="gv" style="left:759px;top:253px;height:403px"></div>
<div class="gv" style="left:823px;top:253px;height:403px"></div>
<div class="gv" style="left:887px;top:253px;height:403px"></div>
<div class="gv" style="left:951px;top:253px;height:403px"></div>
<div class="gv" style="left:1015px;top:253px;height:403px"></div>
<div class="gv" style="left:1079px;top:253px;height:403px"></div>
<div class="gv" style="left:1143px;top:253px;height:403px"></div>
<div class="gv" style="left:1207px;top:253px;height:403px"></div>
<div class="gv" style="left:1271px;top:253px;height:403px"></div>
<div class="gv" style="left:1335px;top:253px;height:403px"></div>
<div class="a" style="left:1344px;top:252px;width:1px;height:404px;background:#ababab"></div>
<div class="hl" style="left:26px;top:277px;width:453px"></div>
<div class="hl" style="left:26px;top:302px;width:453px"></div>
<div class="hl" style="left:26px;top:327px;width:453px"></div>
<div class="hl" style="left:26px;top:377px;width:453px"></div>
<div class="hl" style="left:26px;top:402px;width:453px"></div>
<div class="hl" style="left:26px;top:452px;width:453px"></div>
<div class="hl" style="left:26px;top:527px;width:453px"></div>
<div class="hl" style="left:26px;top:577px;width:453px"></div>
<div class="hl" style="left:26px;top:652px;width:453px"></div>
<div class="vl" style="left:76px;top:253px;height:403px"></div>
<div class="vl" style="left:310px;top:253px;height:403px"></div>
<div class="vl" style="left:478px;top:253px;height:403px"></div>
<div class="c" style="left:26px;top:253px;width:50px;text-align:center;font-size:19.3px;font-weight:bold">STT</div>
<div class="c" style="left:77px;top:253px;width:233px;text-align:center;font-size:19.3px;font-weight:bold">Nội dung chi</div>
<div class="c" style="left:26px;top:278.0px;width:50px;text-align:center">1</div>
<div class="c" style="left:80px;top:278px;letter-spacing:-0.136px">Sản xuất kỷ niệm chương</div>
<div class="c" style="left:26px;top:303.0px;width:50px;text-align:center">2</div>
<div class="c" style="left:80px;top:303px;letter-spacing:-0.244px">Làm giấy chứng nhận</div>
<div class="c" style="left:26px;top:340.5px;width:50px;text-align:center">3</div>
<div class="c" style="left:80px;top:328px;letter-spacing:-0.236px">Kỷ niệm 70 năm ngày truyền</div>
<div class="c" style="left:80px;top:353px;letter-spacing:-0.125px">thống</div>
<div class="c" style="left:26px;top:378.0px;width:50px;text-align:center">4</div>
<div class="c" style="left:80px;top:378px;letter-spacing:-0.312px">Hội nghị đánh giá</div>
<div class="c" style="left:26px;top:415.5px;width:50px;text-align:center">5</div>
<div class="c" style="left:80px;top:403px;letter-spacing:-0.127px">Hội nghị đánh giá Đề án Đảo</div>
<div class="c" style="left:80px;top:428px;letter-spacing:-0.278px">Thanh niên</div>
<div class="c" style="left:26px;top:478.0px;width:50px;text-align:center">6</div>
<div class="c" style="left:80px;top:453px;letter-spacing:-0.096px">Chi đoàn ra: Phối hợp triển</div>
<div class="c" style="left:80px;top:478px;letter-spacing:-0.033px">khai công tác chuẩn bị đề án</div>
<div class="c" style="left:80px;top:503px;letter-spacing:0.095px">hỗ trợ TWĐ TNND CM Lào</div>
<div class="c" style="left:26px;top:540.5px;width:50px;text-align:center">7</div>
<div class="c" style="left:80px;top:528px;letter-spacing:-0.017px">Các hoạt động kỷ niệm 70</div>
<div class="c" style="left:80px;top:553px;letter-spacing:-0.122px">năm Bác Hồ tặng thơ</div>
<div class="c" style="left:26px;top:603.0px;width:50px;text-align:center">8</div>
<div class="c" style="left:80px;top:578px;letter-spacing:-0.130px">Kiểm tra, giám sát tình hình</div>
<div class="c" style="left:80px;top:603px;letter-spacing:-0.104px">triển khai Đề án Đảo Thanh</div>
<div class="c" style="left:80px;top:628px;letter-spacing:-0.287px">niên 2014 - 2020</div>
<div class="a" style="left:99px;top:654px;width:4px;height:2px;background:#444"></div>

<!--GRIDEND-->
<!--LOGOSTART-->
<div class="a" style="left:522px;top:275px;width:274px;height:274px;background:#fff"></div>
<svg class="a" style="left:522px;top:275px" width="274" height="274" viewBox="522 275 274 274">
 <g fill="none" stroke="#1f3d8e" stroke-width="1.35" stroke-linecap="round" stroke-linejoin="round">
  <!-- hair -->
  <path d="M648.5 369C645 362 645 356 647.5 353.5C649 356 651 357 655 356C662 354 670 354 674 358C677 361 676 366 673.5 369C670 366 664 366 656 366C652 366 650 367 648.5 369Z"/>
  <!-- face -->
  <path d="M649 366C648 375 652 383 661 384C669 384 673 376 673.5 368"/>
  <circle cx="647.5" cy="371" r="2.3"/>
  <circle cx="674.5" cy="370" r="2.3"/>
  <!-- neck / collar -->
  <path d="M655 383L654 389L661 394L668 389L667 383"/>
  <path d="M654 389C648 390 645 391 643.5 393"/>
  <path d="M668 389C676 390 681 394 682 400L684 416"/>
  <!-- laptop -->
  <path d="M633.5 393H675.5L680.5 416.5H637.5Z"/>
  <path d="M636.5 417H685.5V421H636.5Z"/>
  <circle cx="656" cy="405" r="5.3"/>
  <!-- rays -->
  <path d="M635 378L640 383M628.5 387L635 390.3M625 397.6L631.6 399M624 407.7H631.6"/>
  <path d="M685.7 377.5L680.5 383M691.5 386.6L685.2 390.3M695.2 397.6L688 399M695.7 407.7H688.4"/>
 </g>
 <circle cx="657.5" cy="373" r="1" fill="#1f3d8e"/>
 <circle cx="665.5" cy="373" r="1" fill="#1f3d8e"/>
 <path d="M655 376.5H667C667 380 664 382 661 382C658 382 655 380 655 376.5Z" fill="#1f3d8e"/>
 <text x="590" y="445.3" font-family="Liberation Sans" font-weight="bold" font-size="17" fill="#1d3b8c" textLength="140" lengthAdjust="spacingAndGlyphs">ThuthuatOffice</text>
 <text x="607.5" y="454.5" font-family="Liberation Sans" font-weight="bold" font-size="4.6" fill="#3a4a7a" textLength="105" lengthAdjust="spacing">TRI KY CUA DAN CONG SO</text>
</svg>
<!-- selection + red box -->
<div class="a" style="left:75px;top:326px;width:236px;height:53px;border:2px solid #217346"></div>
<div class="a" style="left:308px;top:375px;width:6px;height:6px;background:#217346;border:1px solid #fff"></div>
<div class="a" style="left:75px;top:327px;width:237px;height:58px;border:5px solid #ec1c24"></div>
<!--LOGOEND-->

<!--MISCSTART-->
<!-- QAT -->
<svg class="a" style="left:9px;top:161px" width="14" height="14" viewBox="0 0 14 14">
 <rect x="0" y="0" width="14" height="14" rx="1" fill="#7f4ea8"/>
 <path d="M2 1h10v5.2a0.8 0.8 0 0 1-0.8 0.8H2.8A0.8 0.8 0 0 1 2 6.2z" fill="#fff"/>
 <rect x="3" y="9" width="8" height="4" fill="#fff"/>
 <rect x="4.8" y="11" width="2.2" height="2" fill="#7f4ea8"/>
</svg>
<svg class="a" style="left:43px;top:160px" width="16" height="15" viewBox="0 0 16 15">
 <path d="M2.5 5H9.5A4.2 4.2 0 0 1 9.5 13.4H9" fill="none" stroke="#3e7ec1" stroke-width="2.3"/>
 <path d="M6.8 1.3L1.6 5L6.8 8.7" fill="none" stroke="#3e7ec1" stroke-width="2.4"/>
</svg>
<div class="a" style="left:64px;top:166px;width:0;height:0;border-left:3px solid transparent;border-right:3px solid transparent;border-top:3px solid #555"></div>
<svg class="a" style="left:84px;top:160px" width="16" height="15" viewBox="0 0 16 15">
 <path d="M13.5 5H6.5A4.2 4.2 0 0 0 6.5 13.4H7" fill="none" stroke="#a6a6a6" stroke-width="2.3"/>
 <path d="M9.2 1.3L14.4 5L9.2 8.7" fill="none" stroke="#a6a6a6" stroke-width="2.4"/>
</svg>
<div class="a" style="left:104.5px;top:166px;width:0;height:0;border-left:3px solid transparent;border-right:3px solid transparent;border-top:3px solid #b5b5b5"></div>
<svg class="a" style="left:123px;top:164px" width="7" height="9" viewBox="0 0 7 9"><path d="M1 1.5h5" stroke="#d0d0d0"/><path d="M0.5 4.5h6L3.5 8z" fill="#d0d0d0"/></svg>

<!-- formula bar icons -->
<div class="a" style="left:93.5px;top:207px;width:0;height:0;border-left:3.5px solid transparent;border-right:3.5px solid transparent;border-top:4px solid #555"></div>
<div class="a" style="left:121px;top:205px;width:2px;height:2px;background:#999"></div>
<div class="a" style="left:121px;top:209px;width:2px;height:2px;background:#999"></div>
<div class="a" style="left:121px;top:213px;width:2px;height:2px;background:#999"></div>
<svg class="a" style="left:150px;top:205px" width="12" height="11" viewBox="0 0 12 11"><path d="M1 0.5l10 10M11 0.5L1 10.5" stroke="#c6c6c6" stroke-width="1.6"/></svg>
<svg class="a" style="left:186px;top:204px" width="14" height="13" viewBox="0 0 14 13"><path d="M1 6.5l4.2 4.2L13 1.5" fill="none" stroke="#c9c9c9" stroke-width="2.3"/></svg>
<svg class="a" style="left:221.7px;top:202px" width="16" height="16" viewBox="0 0 16 16"><text x="1" y="12" font-family="Liberation Serif" font-style="italic" font-weight="bold" font-size="14" fill="#555">f</text><text x="6.6" y="12" font-family="Liberation Serif" font-style="italic" font-weight="bold" font-size="10.5" fill="#555">x</text></svg>
<svg class="a" style="left:1347px;top:205px" width="10" height="7" viewBox="0 0 10 7"><path d="M1 1.5l4 4 4-4" fill="none" stroke="#555" stroke-width="1.6"/></svg>

<!-- scrollbar -->
<div class="a" style="left:1345px;top:233px;width:21px;height:423px;background:#e6e6e6"></div>
<div class="a" style="left:1348px;top:250px;width:15px;height:406px;background:#dadada"></div>
<div class="a" style="left:1348px;top:235px;width:15px;height:15px;background:#fff;border:1px solid #ababab"></div>
<div class="a" style="left:1352px;top:240px;width:0;height:0;border-left:4px solid transparent;border-right:4px solid transparent;border-bottom:4px solid #666"></div>
<div class="a" style="left:1348px;top:250px;width:15px;height:122px;background:#fff;border:1px solid #ababab"></div>
<!--MISCEND-->
</body></html>
